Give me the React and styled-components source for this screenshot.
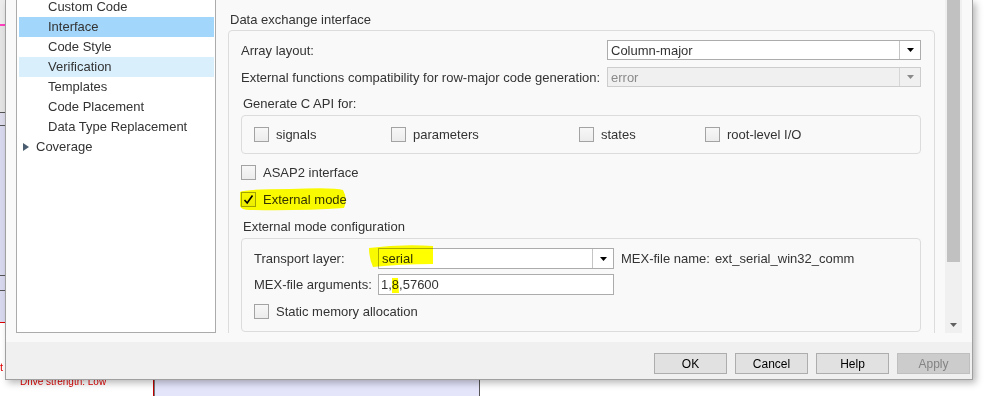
import React from "react";
import styled, { createGlobalStyle } from "styled-components";

const GlobalStyle = createGlobalStyle`
  html, body { margin: 0; padding: 0; background: #fff; }
  body { font-family: "Liberation Sans", Arial, sans-serif; overflow: hidden; }
  #root { width: 993px; height: 396px; }
  * { box-sizing: border-box; }
`;

const Desktop = styled.div`
  position: relative;
  width: 993px;
  height: 396px;
  overflow: hidden;
  background: #fff;
`;

/* background canvas pieces (behind the dialog) */
const CanvasBand = styled.div`
  position: absolute;
  left: 0;
  width: 6px;
  top: ${(p) => p.$top}px;
  height: ${(p) => p.$h}px;
  background: ${(p) => p.$bg};
`;

const BlockShape = styled.div`
  position: absolute;
  left: 153px;
  top: 379px;
  width: 327px;
  height: 30px;
  background: #e4e4fb;
  border-left: 1px solid #c00000;
  border-right: 1px solid #555;
  box-shadow: inset 1px 0 0 #777;
`;

const CanvasText = styled.div`
  position: absolute;
  left: ${(p) => p.$x}px;
  top: ${(p) => p.$y}px;
  font-size: ${(p) => p.$size}px;
  color: #e00000;
  white-space: nowrap;
  line-height: 1;
`;

/* dialog window */
const Dialog = styled.div`
  position: absolute;
  left: 5px;
  top: 0;
  width: 968px;
  height: 380px;
  border: 1px solid #a0a0a0;
  border-top: none;
  background: #f0f0f0;
  box-shadow: 3px 3px 7px rgba(0, 0, 0, 0.28);
  display: flex;
  flex-direction: column;
`;

const Body = styled.div`
  height: 342px;
  background: #f9f9f9;
  display: flex;
  padding: 0 10px 9px 10px;
`;

const Tree = styled.div`
  width: 200px;
  height: 333px;
  flex-shrink: 0;
  background: #fff;
  border: 1px solid #ababab;
  border-top: none;
  overflow: hidden;
`;

const TreeList = styled.ul`
  list-style: none;
  margin: -3px 0 0;
  padding: 0 1px 0 2px;
`;

const TreeRow = styled.li`
  height: 20px;
  line-height: 20px;
  font-size: 13px;
  color: #333;
  display: flex;
  align-items: center;
  padding-left: ${(p) => p.$indent}px;
  background: ${(p) =>
    p.$state === "selected" ? "#a2d6fa" : p.$state === "hover" ? "#d9effc" : "transparent"};
`;

const Expander = styled.svg`
  width: 6px;
  height: 8px;
  margin-right: 7px;
  flex-shrink: 0;
`;

const Pane = styled.div`
  flex: 1;
  display: flex;
  height: 333px;
`;

const Viewport = styled.div`
  flex: 1;
  height: 333px;
  overflow: hidden;
  padding: 0 10px 0 12px;
`;

const SectionTitle = styled.div`
  font-size: 13px;
  line-height: 16px;
  color: #333;
  margin: ${(p) => p.$mt}px 0 ${(p) => p.$mb}px 2px;
  white-space: nowrap;
`;

const GroupBox = styled.div`
  border: 1px solid #dcdcdc;
  border-radius: 4px;
  padding: ${(p) => p.$pad};
`;

const FieldRow = styled.div`
  display: flex;
  align-items: center;
  justify-content: ${(p) => (p.$spread ? "space-between" : "flex-start")};
  height: ${(p) => p.$h}px;
  margin-top: ${(p) => p.$mt || 0}px;
`;

const Label = styled.span`
  font-size: 13px;
  color: #333;
  white-space: nowrap;
  width: ${(p) => (p.$w ? `${p.$w}px` : "auto")};
  flex-shrink: 0;
  margin-left: ${(p) => p.$ml || 0}px;
`;

const Select = styled.div`
  width: ${(p) => p.$w}px;
  height: ${(p) => p.$h}px;
  border: 1px solid ${(p) => (p.$disabled ? "#cdcdcd" : "#acacac")};
  background: ${(p) => (p.$disabled ? "#f0f0f0" : "#fff")};
  display: flex;
  flex-shrink: 0;
`;

const SelectValue = styled.span`
  flex: 1;
  padding-left: 3px;
  font-size: 13px;
  display: flex;
  align-items: center;
  color: ${(p) => (p.$disabled ? "#8a8a8a" : "#333")};
`;

const SelectButton = styled.span`
  width: 21px;
  border-left: 1px solid ${(p) => (p.$disabled ? "#d6d6d6" : "#c4c4c4")};
  display: flex;
  align-items: center;
  justify-content: center;
`;

const TextInput = styled.div`
  width: ${(p) => p.$w}px;
  height: ${(p) => p.$h}px;
  border: 1px solid #acacac;
  background: #fff;
  font-size: 13px;
  color: #333;
  padding-left: 2px;
  display: flex;
  align-items: center;
  flex-shrink: 0;
`;

const CheckGroup = styled.div`
  margin-top: 3px;
  height: 39px;
  border: 1px solid #dcdcdc;
  border-radius: 4px;
  display: flex;
  align-items: center;
  padding-left: 12px;
`;

const CheckItem = styled.label`
  display: flex;
  align-items: center;
  width: ${(p) => (p.$w ? `${p.$w}px` : "auto")};
  height: ${(p) => p.$h || 20}px;
  margin-top: ${(p) => p.$mt || 0}px;
  font-size: 13px;
  color: #333;
  white-space: nowrap;
`;

const Box = styled.span`
  width: 15px;
  height: 15px;
  border: 1px solid #a3a3a3;
  background: linear-gradient(#f7f7f7, #ececec);
  margin-right: 7px;
  flex-shrink: 0;
  display: flex;
  align-items: center;
  justify-content: center;
`;

const Scrollbar = styled.div`
  width: 17px;
  height: 333px;
  background: #f0f0f0;
  display: flex;
  flex-direction: column;
  flex-shrink: 0;
`;

const Thumb = styled.div`
  height: 262px;
  margin: 0 2px;
  background: #c1c1c1;
`;

const ScrollArrow = styled.div`
  margin-top: auto;
  height: 17px;
  display: flex;
  align-items: center;
  justify-content: center;
`;

const Footer = styled.div`
  height: 37px;
  display: flex;
  justify-content: flex-end;
  align-items: flex-start;
  gap: 8px;
  padding: 11px 2px 0 0;
`;

const Button = styled.button`
  width: 73px;
  height: 21px;
  border: 1px solid ${(p) => (p.$disabled ? "#bfbfbf" : "#adadad")};
  background: ${(p) => (p.$disabled ? "#cccccc" : "#e1e1e1")};
  color: ${(p) => (p.$disabled ? "#838383" : "#000")};
  font-family: "Liberation Sans", Arial, sans-serif;
  font-size: 12px;
  padding: 0;
  margin: 0;
`;

const Marker = styled.svg`
  position: absolute;
  left: 0;
  top: 0;
  width: 993px;
  height: 396px;
  pointer-events: none;
  mix-blend-mode: multiply;
`;

const Triangle = ({ color = "#000" }) => (
  <svg width="7" height="4" viewBox="0 0 7 4">
    <path d="M0 0 H7 L3.5 4 Z" fill={color} />
  </svg>
);

const Check = ({ checked, children, ...rest }) => (
  <CheckItem {...rest}>
    <Box>
      {checked && (
        <svg width="11" height="11" viewBox="0 0 11 11">
          <path d="M1.5 6 L4.2 9 L9.5 1.5" stroke="#000" strokeWidth="1.6" fill="none" />
        </svg>
      )}
    </Box>
    {children}
  </CheckItem>
);

const treeItems = [
  { label: "Custom Code" },
  { label: "Interface", state: "selected" },
  { label: "Code Style" },
  { label: "Verification", state: "hover" },
  { label: "Templates" },
  { label: "Code Placement" },
  { label: "Data Type Replacement" },
];

export default function App() {
  return (
    <Desktop>
      <GlobalStyle />
      <CanvasBand $top={0} $h={24} $bg="#ececec" />
      <CanvasBand $top={24} $h={2} $bg="#ff3fbf" />
      <CanvasBand $top={26} $h={86} $bg="#e4e4e4" />
      <CanvasBand $top={112} $h={1} $bg="#555" />
      <CanvasBand $top={113} $h={12} $bg="#dcdcec" />
      <CanvasBand $top={125} $h={1} $bg="#555" />
      <CanvasBand $top={126} $h={149} $bg="#d8d8ef" />
      <CanvasBand $top={275} $h={1} $bg="#555" />
      <CanvasBand $top={276} $h={14} $bg="#d8d8ef" />
      <CanvasBand $top={290} $h={1} $bg="#555" />
      <CanvasBand $top={291} $h={31} $bg="#d8d8ef" />
      <CanvasBand $top={322} $h={1} $bg="#e00000" />
      <CanvasText $x={0} $y={362} $size={11}>t</CanvasText>
      <BlockShape />
      <CanvasText $x={20} $y={377} $size={10}>Drive strength: Low</CanvasText>

      <Dialog>
        <Body>
          <Tree>
            <TreeList>
              {treeItems.map((it) => (
                <TreeRow key={it.label} $indent={29} $state={it.state}>
                  {it.label}
                </TreeRow>
              ))}
              <TreeRow $indent={4}>
                <Expander viewBox="0 0 6 8">
                  <path d="M0 0 L6 4 L0 8 Z" fill="#4b5d70" />
                </Expander>
                Coverage
              </TreeRow>
            </TreeList>
          </Tree>

          <Pane>
            <Viewport>
              <SectionTitle $mt={12} $mb={2}>Data exchange interface</SectionTitle>
              <GroupBox $pad="9px 13px 30px 12px">
                <FieldRow $h={20} $spread>
                  <Label>Array layout:</Label>
                  <Select $w={314} $h={20}>
                    <SelectValue>Column-major</SelectValue>
                    <SelectButton>
                      <Triangle />
                    </SelectButton>
                  </Select>
                </FieldRow>
                <FieldRow $h={20} $mt={7} $spread>
                  <Label>External functions compatibility for row-major code generation:</Label>
                  <Select $w={314} $h={20} $disabled>
                    <SelectValue $disabled>error</SelectValue>
                    <SelectButton $disabled>
                      <Triangle color="#8a8a8a" />
                    </SelectButton>
                  </Select>
                </FieldRow>

                <SectionTitle $mt={9} $mb={0}>
                  Generate C API for:
                </SectionTitle>
                <CheckGroup>
                  <Check $w={137}>signals</Check>
                  <Check $w={188}>parameters</Check>
                  <Check $w={126}>states</Check>
                  <Check>root-level I/O</Check>
                </CheckGroup>

                <Check $mt={8}>ASAP2 interface</Check>
                <Check $mt={7} checked>
                  External mode
                </Check>

                <SectionTitle $mt={10} $mb={3}>
                  External mode configuration
                </SectionTitle>
                <GroupBox $pad="9px 0 10px 12px">
                  <FieldRow $h={21}>
                    <Label $w={124}>Transport layer:</Label>
                    <Select $w={236} $h={21}>
                      <SelectValue>serial</SelectValue>
                      <SelectButton>
                        <Triangle />
                      </SelectButton>
                    </Select>
                    <Label $ml={7}>MEX-file name:</Label>
                    <Label $ml={5}>ext_serial_win32_comm</Label>
                  </FieldRow>
                  <FieldRow $h={21} $mt={5}>
                    <Label $w={124}>MEX-file arguments:</Label>
                    <TextInput $w={236} $h={21}>1,8,57600</TextInput>
                  </FieldRow>
                  <Check $mt={6}>Static memory allocation</Check>
                </GroupBox>
              </GroupBox>
            </Viewport>
            <Scrollbar>
              <Thumb />
              <ScrollArrow>
                <Triangle color="#606060" />
              </ScrollArrow>
            </Scrollbar>
          </Pane>
        </Body>
        <Footer>
          <Button>OK</Button>
          <Button>Cancel</Button>
          <Button>Help</Button>
          <Button $disabled>Apply</Button>
        </Footer>
      </Dialog>

      <Marker viewBox="0 0 993 396">
        <path
          d="M240 192 Q246 189 290 189 Q334 187 343 190 Q348 199 344 208 Q300 211 250 210 Q241 210 240 206 Z"
          fill="#ffff00"
        />
        <path d="M369 248 Q400 244 433 246 L433 264 Q400 264 373 267 Q369 258 369 248 Z" fill="#ffff00" />
        <path d="M392 278 L398 278 L399 293 L392 293 Z" fill="#ffff00" />
      </Marker>
    </Desktop>
  );
}
